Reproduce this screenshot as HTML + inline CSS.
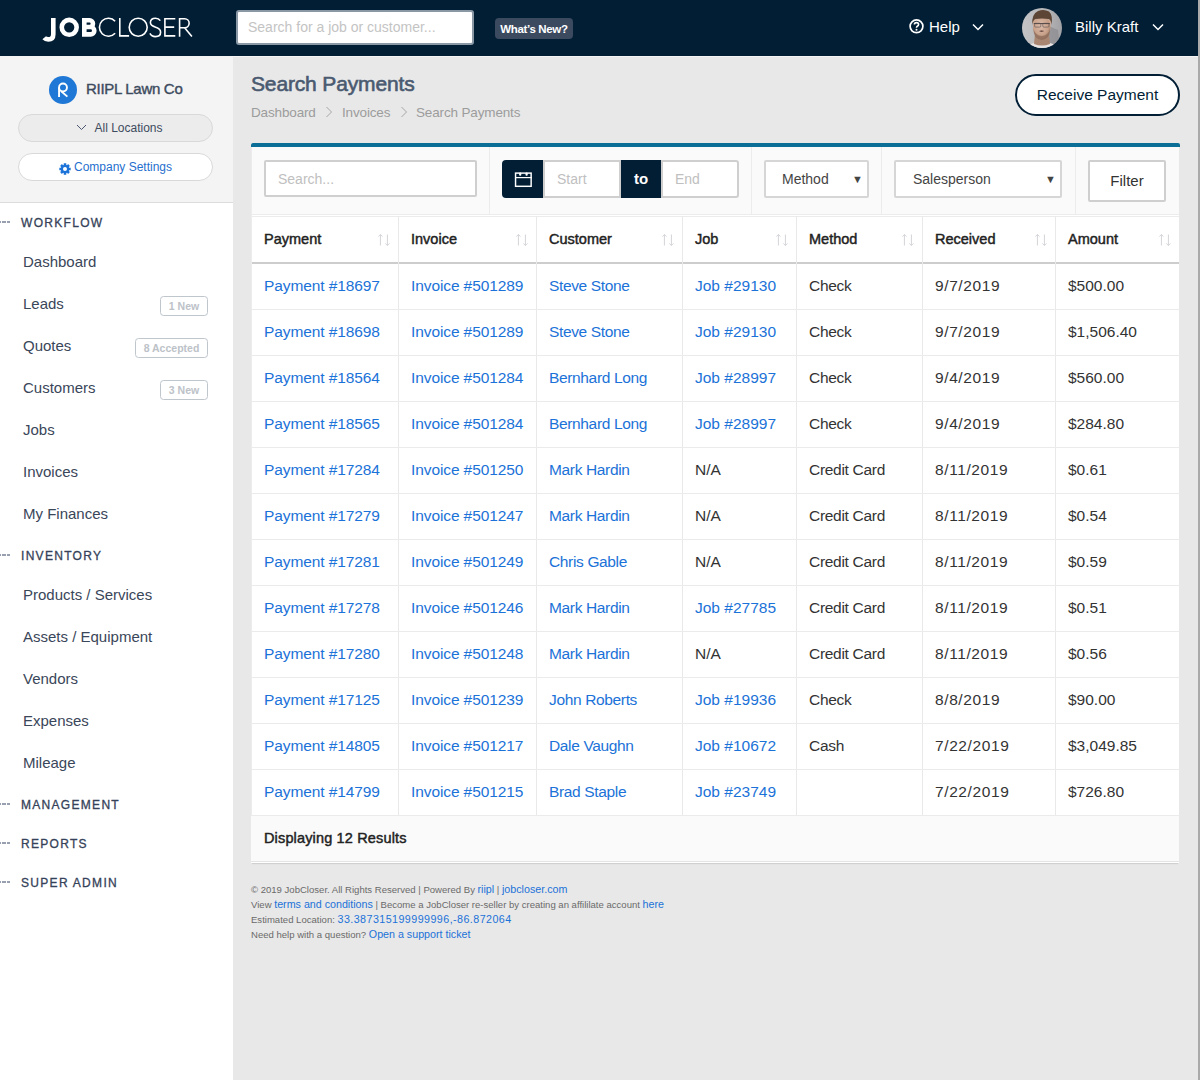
<!DOCTYPE html>
<html><head><meta charset="utf-8">
<style>
*{box-sizing:border-box;margin:0;padding:0}
html,body{width:1200px;height:1080px;overflow:hidden;background:#e8e8e8;font-family:"Liberation Sans",sans-serif}
.a{position:absolute;white-space:nowrap}
#hdr{position:absolute;left:0;top:0;width:1198px;height:56px;background:#011e35}
#rstrip{position:absolute;left:1198px;top:0;width:2px;height:1080px;background:#aaa}
#side{position:absolute;left:0;top:56px;width:233px;height:1024px;background:#fff}
#comp{position:absolute;left:0;top:0;width:233px;height:147px;background:#f4f4f4;border-bottom:1px solid #dcdcdc}
#topline{position:absolute;left:233px;top:56px;width:965px;height:1px;background:#f5f5f5}
.logo{left:43px;top:12px;font-size:26px;color:#fff;letter-spacing:0px}
.logo b{font-weight:700}
.logo span{font-weight:400}
.hsearch{left:236px;top:10px;width:238px;height:35px;background:#fff;border:2px solid #8a98a6;border-radius:3px;color:#c4c4c4;font-size:14px;padding:7px 0 0 10px}
.wn{left:495px;top:18px;width:78px;height:21px;background:#3b4a5f;border-radius:4px;color:#fff;font-size:11.5px;font-weight:700;text-align:center;line-height:22px;letter-spacing:-0.35px}
.hw{color:#fff;font-size:15px}
.nav{left:23px;font-size:15px;color:#3a4659}
.sec{left:21px;font-size:12px;font-weight:400;color:#354259;letter-spacing:1.3px;-webkit-text-stroke:0.3px #354259}
.dash{left:0;width:11px;height:2px;margin-top:-0.6px;background:linear-gradient(to right,#56627a 0 0.9px,transparent 0.9px 2.1px,#56627a 2.1px 5.9px,transparent 5.9px 7px,#56627a 7px 10.2px,transparent 10.2px);transform:scaleY(0.6)}
.badge{height:20px;border:1px solid #bfc6cc;border-radius:3.5px;color:#bcc2c8;font-size:10.5px;font-weight:700;text-align:center;line-height:18px}
.pill{left:18px;width:195px;height:28px;border:1px solid #d9d9d9;border-radius:14px;font-size:12px;text-align:center;line-height:26px}
.title{left:251px;top:72px;font-size:21px;font-weight:400;color:#4a5a70;-webkit-text-stroke:0.6px #4a5a70;letter-spacing:-0.15px}
.bc{top:105px;font-size:13.5px;color:#9c9c9c;letter-spacing:-0.15px}
.rp{left:1015px;top:74px;width:165px;height:42px;border:2px solid #011e35;border-radius:21px;background:#fff;color:#011e35;font-size:15.5px;text-align:center;line-height:37px}
#card{position:absolute;left:251px;top:143px;width:928px;height:720px;background:#fff;box-shadow:0 2px 1px -1px rgba(0,0,0,.10)}
.blue{left:251px;top:143px;width:929px;height:4px;background:#0b6e96;border-radius:2px 2px 0 0}
.fbar{left:251px;top:147px;width:928px;height:68px;background:#fafafa;border-bottom:1px solid #ececec;border-left:1px solid #efefef}
.vd{top:147px;width:1px;height:67px;background:#ececec}
.inp{height:37px;background:#fff;border:2px solid #cfcfcf;border-radius:2px;color:#c0c0c0;font-size:14px;padding:0 0 0 12px;line-height:35px}
.dk{background:#011e35;color:#fff}
.sel{height:38px;background:#fff;border:2px solid #d6d6d6;border-radius:2px;color:#444;font-size:14px;line-height:35px}
.th{position:absolute;top:216px;height:46px;padding-left:13px;line-height:46px;font-size:14.5px;font-weight:400;-webkit-text-stroke:0.45px #222;color:#222;white-space:nowrap}
.sort{position:absolute;right:8px;top:18px;width:12px;height:12px}
.td{position:absolute;height:46px;padding-left:13px;line-height:43px;font-size:15.5px;color:#333;white-space:nowrap;border-bottom:1px solid #ebebeb}
.lnk{color:#1b72d8}
.vcol{position:absolute;top:216px;width:1px;height:599px;background:#e9e9e9}
.foot{font-size:9.55px;color:#6a6a6a;left:251px}
.foot i{font-style:normal;color:#1b72d8;font-size:10.7px}
</style></head><body>
<div id="hdr"></div>
<div id="rstrip"></div>
<div id="side"><div id="comp"></div></div>
<div id="topline"></div>

<!-- header -->
<svg class="a" style="left:0;top:0" width="200" height="56" viewBox="0 0 200 56">
<g fill="none" stroke="#fff" stroke-linecap="butt">
<path d="M53.3 18 V34.2 Q53.3 39.4 48.3 39.4 Q45.5 39.4 44.2 37.8" stroke-width="4.6"/>
<circle cx="69.2" cy="27.35" r="7.45" stroke-width="4.6"/>
<path d="M84.3 18 V36.7 M84.3 20.3 H89.6 A3.35 3.35 0 0 1 89.6 27 H84.3 M84.3 27 H90.6 A3.7 3.7 0 0 1 90.6 34.4 H84.3" stroke-width="4.6"/>
<path d="M115.1 21.2 A9 9 0 1 0 115.1 33.3" stroke-width="1.6"/>
<path d="M119.8 18 V35.9 H129.1" stroke-width="1.6"/>
<circle cx="138.2" cy="27.25" r="9" stroke-width="1.6"/>
<path d="M160.3 20.6 C159.2 18.9 157.5 18.2 155.5 18.2 C152.3 18.2 150.4 20.1 150.4 22.6 C150.4 25.6 153.2 26.5 155.7 27.3 C158.6 28.2 160.6 29.6 160.6 32.2 C160.6 35 158.3 36.6 155.4 36.6 C152.9 36.6 150.9 35.4 149.9 33.4" stroke-width="1.6"/>
<path d="M175.3 18.8 H164.9 V35.9 H175.3 M164.9 27.1 H174.2" stroke-width="1.6"/>
<path d="M179.6 36.7 V18.8 H184.7 A4.45 4.45 0 0 1 184.7 27.7 H179.6 M184.6 27.7 L191.9 36.6" stroke-width="1.6"/>
</g></svg>
<div class="a hsearch">Search for a job or customer...</div>
<div class="a wn">What’s New?</div>
<svg class="a" style="left:909px;top:19px" width="16" height="16" viewBox="0 0 16 16"><circle cx="7.5" cy="7.3" r="6.4" fill="none" stroke="#fff" stroke-width="1.7"/><path d="M5.4 5.6 Q5.4 3.6 7.5 3.6 Q9.6 3.6 9.6 5.4 Q9.6 6.6 8.3 7.2 Q7.5 7.6 7.5 8.8" fill="none" stroke="#fff" stroke-width="1.6"/><circle cx="7.5" cy="10.8" r="1" fill="#fff"/></svg>
<div class="a hw" style="left:929px;top:18px">Help</div>
<svg class="a" style="left:972px;top:23px" width="12" height="8" viewBox="0 0 12 8"><path d="M1 1.5 L6 6.5 L11 1.5" fill="none" stroke="#fff" stroke-width="1.5"/></svg>
<svg class="a" style="left:1022px;top:8px" width="40" height="40" viewBox="0 0 40 40">
<defs><clipPath id="cc"><circle cx="20" cy="20" r="20"/></clipPath>
<linearGradient id="bgg" x1="0" x2="1" y1="0" y2="0"><stop offset="0" stop-color="#c4c4c6"/><stop offset="0.6" stop-color="#b6b6b8"/><stop offset="1" stop-color="#a2a2a6"/></linearGradient>
<radialGradient id="fg" cx="0.45" cy="0.4" r="0.6"><stop offset="0" stop-color="#dcbcaa"/><stop offset="0.7" stop-color="#c9a28b"/><stop offset="1" stop-color="#a4806b"/></radialGradient></defs>
<g clip-path="url(#cc)">
<rect width="40" height="40" fill="url(#bgg)"/>
<path d="M27 18 L36 22 L38 40 L26 40Z" fill="#86858a" opacity="0.6"/>
<path d="M4 40 L9 36 L15 34 L25 34 L31 36 L36 40Z" fill="#e6e3e2"/>
<path d="M13 26 L27 26 L28 36 Q20 39 12 36Z" fill="#a88672"/>
<path d="M11 12 Q20 8 29 12 L28.4 22 L11.2 22Z" fill="#cfa892"/><ellipse cx="19.8" cy="19.8" rx="8.6" ry="11.4" fill="url(#fg)"/>
<path d="M11.3 21 Q12 31.5 19.8 32 Q27.6 31.5 28.3 21 Q26 27.5 19.8 28 Q13.5 27.5 11.3 21Z" fill="#8a6a58" opacity="0.7"/>
<path d="M17 23 Q19.5 22.2 22.2 23 Q19.5 24.3 17 23Z" fill="#4a2f2c"/>
<path d="M10.2 17 Q9.5 6 16 3 Q22 0.6 27 3.5 Q31 7 29.6 17 Q29 11.5 26.5 11 Q20 9.8 13.5 11 Q11 11.8 10.2 17Z" fill="#5d4535"/>
<path d="M11.8 15.6 H27.8" stroke="#3e3838" stroke-width="0.9"/>
<rect x="12.6" y="15.3" width="6.2" height="3.8" rx="1" fill="none" stroke="#5a5050" stroke-width="0.6"/>
<rect x="20.8" y="15.3" width="6.2" height="3.8" rx="1" fill="none" stroke="#5a5050" stroke-width="0.6"/>
</g></svg>
<div class="a hw" style="left:1075px;top:18px">Billy Kraft</div>
<svg class="a" style="left:1152px;top:23px" width="12" height="8" viewBox="0 0 12 8"><path d="M1 1.5 L6 6.5 L11 1.5" fill="none" stroke="#fff" stroke-width="1.5"/></svg>

<!-- sidebar company -->
<svg class="a" style="left:49px;top:76px" width="28" height="28" viewBox="0 0 28 28"><circle cx="14" cy="14" r="14" fill="#1f78d6"/><g fill="none" stroke="#fff" stroke-width="1.9"><path d="M10.05 21 V11.5"/><circle cx="14" cy="11.5" r="3.95"/><path d="M12.2 15.3 L18.4 20.6"/></g></svg>
<div class="a" id="cname" style="left:86px;top:80px;font-size:15px;font-weight:400;color:#3d4b5e;-webkit-text-stroke:0.4px #3d4b5e;letter-spacing:-0.3px">RIIPL Lawn Co</div>
<div class="a pill" style="top:114px;background:#ececec;color:#3d4b5e">
<svg style="vertical-align:middle;margin-right:7px;margin-top:-3px;margin-left:8px" width="11" height="7" viewBox="0 0 11 7"><path d="M1 1 L5.5 5.5 L10 1" fill="none" stroke="#4b5670" stroke-width="1"/></svg>All Locations</div>
<div class="a pill" style="top:153px;background:#fff;color:#1f6fce"><svg style="vertical-align:middle;margin-right:3px;position:relative;top:1px" width="12" height="12" viewBox="0 0 12 12"><path fill="#1b72d8" fill-rule="evenodd" d="M10.11 4.73 L11.66 4.73 L11.66 7.27 L10.11 7.27 L9.80 8.01 L10.90 9.11 L9.11 10.90 L8.01 9.80 L7.27 10.11 L7.27 11.66 L4.73 11.66 L4.73 10.11 L3.99 9.80 L2.89 10.90 L1.10 9.11 L2.20 8.01 L1.89 7.27 L0.34 7.27 L0.34 4.73 L1.89 4.73 L2.20 3.99 L1.10 2.89 L2.89 1.10 L3.99 2.20 L4.73 1.89 L4.73 0.34 L7.27 0.34 L7.27 1.89 L8.01 2.20 L9.11 1.10 L10.90 2.89 L9.80 3.99Z M8 6 A2 2 0 1 0 4 6 A2 2 0 1 0 8 6Z"/></svg>Company Settings</div>

<!-- sidebar nav -->
<div class="a dash" style="top:222px"></div><div class="a sec" style="top:216px">WORKFLOW</div>
<div class="a nav" style="top:253px">Dashboard</div>
<div class="a nav" style="top:295px">Leads</div><div class="a badge" style="left:160px;top:296px;width:48px">1 New</div>
<div class="a nav" style="top:337px">Quotes</div><div class="a badge" style="left:135px;top:338px;width:73px">8 Accepted</div>
<div class="a nav" style="top:379px">Customers</div><div class="a badge" style="left:160px;top:380px;width:48px">3 New</div>
<div class="a nav" style="top:421px">Jobs</div>
<div class="a nav" style="top:463px">Invoices</div>
<div class="a nav" style="top:505px">My Finances</div>
<div class="a dash" style="top:555px"></div><div class="a sec" style="top:549px">INVENTORY</div>
<div class="a nav" style="top:586px">Products / Services</div>
<div class="a nav" style="top:628px">Assets / Equipment</div>
<div class="a nav" style="top:670px">Vendors</div>
<div class="a nav" style="top:712px">Expenses</div>
<div class="a nav" style="top:754px">Mileage</div>
<div class="a dash" style="top:804px"></div><div class="a sec" style="top:798px">MANAGEMENT</div>
<div class="a dash" style="top:843px"></div><div class="a sec" style="top:837px">REPORTS</div>
<div class="a dash" style="top:882px"></div><div class="a sec" style="top:876px">SUPER ADMIN</div>

<!-- main -->
<div class="a title">Search Payments</div>
<div class="a bc" style="left:251px">Dashboard</div>
<svg class="a" style="left:325px;top:106px" width="8" height="12" viewBox="0 0 8 12"><path d="M1.5 1 L6.5 6 L1.5 11" fill="none" stroke="#a6a6a6" stroke-width="1"/></svg>
<div class="a bc" style="left:342px">Invoices</div>
<svg class="a" style="left:400px;top:106px" width="8" height="12" viewBox="0 0 8 12"><path d="M1.5 1 L6.5 6 L1.5 11" fill="none" stroke="#a6a6a6" stroke-width="1"/></svg>
<div class="a bc" style="left:416px">Search Payments</div>
<div class="a rp">Receive Payment</div>

<div id="card"></div>
<div class="a blue"></div>
<div class="a fbar"></div>
<div class="a vd" style="left:489px"></div>
<div class="a vd" style="left:751px"></div>
<div class="a vd" style="left:881px"></div>
<div class="a vd" style="left:1075px"></div>
<div class="a inp" style="left:264px;top:160px;width:213px;padding-left:12px">Search...</div>
<div class="a dk" style="left:502px;top:160px;width:41px;height:38px;border-radius:4px 0 0 4px"></div>
<svg class="a" style="left:514px;top:171px" width="19" height="17" viewBox="0 0 19 17"><rect x="1.55" y="2.1" width="15.6" height="13.2" fill="none" stroke="#fff" stroke-width="1.45"/><line x1="1" y1="6.6" x2="17.8" y2="6.6" stroke="#fff" stroke-width="1.2"/><rect x="5.1" y="1.6" width="2.2" height="3.2" rx="1" fill="#fff"/><rect x="11.5" y="1.6" width="2.2" height="3.2" rx="1" fill="#fff"/></svg>
<div class="a inp" style="left:543px;top:160px;width:78px;height:38px;border-radius:0">Start</div>
<div class="a dk" style="left:621px;top:160px;width:40px;height:38px;font-size:15px;font-weight:700;text-align:center;line-height:37px">to</div>
<div class="a inp" style="left:661px;top:160px;width:78px;height:38px;border-radius:0 3px 3px 0">End</div>
<div class="a sel" style="left:764px;top:160px;width:105px;padding-left:16px">Method<span style="position:absolute;right:4px;top:0;font-size:11px">&#9660;</span></div>
<div class="a sel" style="left:894px;top:160px;width:168px;padding-left:17px">Salesperson<span style="position:absolute;right:4px;top:0;font-size:11px">&#9660;</span></div>
<div class="a sel" style="left:1088px;top:160px;width:78px;height:42px;border-color:#cfcfcf;color:#333;font-size:15px;text-align:center;line-height:38px">Filter</div>

<div class="a" style="left:251px;top:215px;width:928px;height:1px;background:#fff"></div>
<div class="a" style="left:251px;top:216px;width:928px;height:1px;background:#ececec"></div>
<div class="a" style="left:251px;top:262px;width:928px;height:2px;background:#cdcdcd"></div>
<div class="a" style="left:251px;top:147px;width:1px;height:715px;background:#ececec"></div>
<div class="vcol" style="left:398px"></div>
<div class="vcol" style="left:536px"></div>
<div class="vcol" style="left:682px"></div>
<div class="vcol" style="left:796px"></div>
<div class="vcol" style="left:922px"></div>
<div class="vcol" style="left:1055px"></div>
<div class="th" style="left:251px;width:147px">Payment<svg class="sort" viewBox="0 0 12 12"><path d="M2.4 0.5 V11.5 M0.3 2.6 L2.4 0.5 L4.5 2.6 M9.4 0.5 V11.5 M7.3 9.4 L9.4 11.5 L11.5 9.4" fill="none" stroke="#d4d4d8" stroke-width="1"/></svg></div>
<div class="th" style="left:398px;width:138px">Invoice<svg class="sort" viewBox="0 0 12 12"><path d="M2.4 0.5 V11.5 M0.3 2.6 L2.4 0.5 L4.5 2.6 M9.4 0.5 V11.5 M7.3 9.4 L9.4 11.5 L11.5 9.4" fill="none" stroke="#d4d4d8" stroke-width="1"/></svg></div>
<div class="th" style="left:536px;width:146px">Customer<svg class="sort" viewBox="0 0 12 12"><path d="M2.4 0.5 V11.5 M0.3 2.6 L2.4 0.5 L4.5 2.6 M9.4 0.5 V11.5 M7.3 9.4 L9.4 11.5 L11.5 9.4" fill="none" stroke="#d4d4d8" stroke-width="1"/></svg></div>
<div class="th" style="left:682px;width:114px">Job<svg class="sort" viewBox="0 0 12 12"><path d="M2.4 0.5 V11.5 M0.3 2.6 L2.4 0.5 L4.5 2.6 M9.4 0.5 V11.5 M7.3 9.4 L9.4 11.5 L11.5 9.4" fill="none" stroke="#d4d4d8" stroke-width="1"/></svg></div>
<div class="th" style="left:796px;width:126px">Method<svg class="sort" viewBox="0 0 12 12"><path d="M2.4 0.5 V11.5 M0.3 2.6 L2.4 0.5 L4.5 2.6 M9.4 0.5 V11.5 M7.3 9.4 L9.4 11.5 L11.5 9.4" fill="none" stroke="#d4d4d8" stroke-width="1"/></svg></div>
<div class="th" style="left:922px;width:133px">Received<svg class="sort" viewBox="0 0 12 12"><path d="M2.4 0.5 V11.5 M0.3 2.6 L2.4 0.5 L4.5 2.6 M9.4 0.5 V11.5 M7.3 9.4 L9.4 11.5 L11.5 9.4" fill="none" stroke="#d4d4d8" stroke-width="1"/></svg></div>
<div class="th" style="left:1055px;width:124px">Amount<svg class="sort" viewBox="0 0 12 12"><path d="M2.4 0.5 V11.5 M0.3 2.6 L2.4 0.5 L4.5 2.6 M9.4 0.5 V11.5 M7.3 9.4 L9.4 11.5 L11.5 9.4" fill="none" stroke="#d4d4d8" stroke-width="1"/></svg></div>
<div class="td lnk" style="letter-spacing:-0.1px;left:251px;top:264px;width:147px">Payment #18697</div>
<div class="td lnk" style="letter-spacing:-0.1px;left:398px;top:264px;width:138px">Invoice #501289</div>
<div class="td lnk" style="letter-spacing:-0.35px;left:536px;top:264px;width:146px">Steve Stone</div>
<div class="td lnk" style="left:682px;top:264px;width:114px">Job #29130</div>
<div class="td" style="letter-spacing:-0.3px;left:796px;top:264px;width:126px">Check</div>
<div class="td" style="letter-spacing:0.6px;left:922px;top:264px;width:133px">9/7/2019</div>
<div class="td" style="left:1055px;top:264px;width:125px">$500.00</div>
<div class="td lnk" style="letter-spacing:-0.1px;left:251px;top:310px;width:147px">Payment #18698</div>
<div class="td lnk" style="letter-spacing:-0.1px;left:398px;top:310px;width:138px">Invoice #501289</div>
<div class="td lnk" style="letter-spacing:-0.35px;left:536px;top:310px;width:146px">Steve Stone</div>
<div class="td lnk" style="left:682px;top:310px;width:114px">Job #29130</div>
<div class="td" style="letter-spacing:-0.3px;left:796px;top:310px;width:126px">Check</div>
<div class="td" style="letter-spacing:0.6px;left:922px;top:310px;width:133px">9/7/2019</div>
<div class="td" style="left:1055px;top:310px;width:125px">$1,506.40</div>
<div class="td lnk" style="letter-spacing:-0.1px;left:251px;top:356px;width:147px">Payment #18564</div>
<div class="td lnk" style="letter-spacing:-0.1px;left:398px;top:356px;width:138px">Invoice #501284</div>
<div class="td lnk" style="letter-spacing:-0.35px;left:536px;top:356px;width:146px">Bernhard Long</div>
<div class="td lnk" style="left:682px;top:356px;width:114px">Job #28997</div>
<div class="td" style="letter-spacing:-0.3px;left:796px;top:356px;width:126px">Check</div>
<div class="td" style="letter-spacing:0.6px;left:922px;top:356px;width:133px">9/4/2019</div>
<div class="td" style="left:1055px;top:356px;width:125px">$560.00</div>
<div class="td lnk" style="letter-spacing:-0.1px;left:251px;top:402px;width:147px">Payment #18565</div>
<div class="td lnk" style="letter-spacing:-0.1px;left:398px;top:402px;width:138px">Invoice #501284</div>
<div class="td lnk" style="letter-spacing:-0.35px;left:536px;top:402px;width:146px">Bernhard Long</div>
<div class="td lnk" style="left:682px;top:402px;width:114px">Job #28997</div>
<div class="td" style="letter-spacing:-0.3px;left:796px;top:402px;width:126px">Check</div>
<div class="td" style="letter-spacing:0.6px;left:922px;top:402px;width:133px">9/4/2019</div>
<div class="td" style="left:1055px;top:402px;width:125px">$284.80</div>
<div class="td lnk" style="letter-spacing:-0.1px;left:251px;top:448px;width:147px">Payment #17284</div>
<div class="td lnk" style="letter-spacing:-0.1px;left:398px;top:448px;width:138px">Invoice #501250</div>
<div class="td lnk" style="letter-spacing:-0.35px;left:536px;top:448px;width:146px">Mark Hardin</div>
<div class="td" style="left:682px;top:448px;width:114px">N/A</div>
<div class="td" style="letter-spacing:-0.3px;left:796px;top:448px;width:126px">Credit Card</div>
<div class="td" style="letter-spacing:0.6px;left:922px;top:448px;width:133px">8/11/2019</div>
<div class="td" style="left:1055px;top:448px;width:125px">$0.61</div>
<div class="td lnk" style="letter-spacing:-0.1px;left:251px;top:494px;width:147px">Payment #17279</div>
<div class="td lnk" style="letter-spacing:-0.1px;left:398px;top:494px;width:138px">Invoice #501247</div>
<div class="td lnk" style="letter-spacing:-0.35px;left:536px;top:494px;width:146px">Mark Hardin</div>
<div class="td" style="left:682px;top:494px;width:114px">N/A</div>
<div class="td" style="letter-spacing:-0.3px;left:796px;top:494px;width:126px">Credit Card</div>
<div class="td" style="letter-spacing:0.6px;left:922px;top:494px;width:133px">8/11/2019</div>
<div class="td" style="left:1055px;top:494px;width:125px">$0.54</div>
<div class="td lnk" style="letter-spacing:-0.1px;left:251px;top:540px;width:147px">Payment #17281</div>
<div class="td lnk" style="letter-spacing:-0.1px;left:398px;top:540px;width:138px">Invoice #501249</div>
<div class="td lnk" style="letter-spacing:-0.35px;left:536px;top:540px;width:146px">Chris Gable</div>
<div class="td" style="left:682px;top:540px;width:114px">N/A</div>
<div class="td" style="letter-spacing:-0.3px;left:796px;top:540px;width:126px">Credit Card</div>
<div class="td" style="letter-spacing:0.6px;left:922px;top:540px;width:133px">8/11/2019</div>
<div class="td" style="left:1055px;top:540px;width:125px">$0.59</div>
<div class="td lnk" style="letter-spacing:-0.1px;left:251px;top:586px;width:147px">Payment #17278</div>
<div class="td lnk" style="letter-spacing:-0.1px;left:398px;top:586px;width:138px">Invoice #501246</div>
<div class="td lnk" style="letter-spacing:-0.35px;left:536px;top:586px;width:146px">Mark Hardin</div>
<div class="td lnk" style="left:682px;top:586px;width:114px">Job #27785</div>
<div class="td" style="letter-spacing:-0.3px;left:796px;top:586px;width:126px">Credit Card</div>
<div class="td" style="letter-spacing:0.6px;left:922px;top:586px;width:133px">8/11/2019</div>
<div class="td" style="left:1055px;top:586px;width:125px">$0.51</div>
<div class="td lnk" style="letter-spacing:-0.1px;left:251px;top:632px;width:147px">Payment #17280</div>
<div class="td lnk" style="letter-spacing:-0.1px;left:398px;top:632px;width:138px">Invoice #501248</div>
<div class="td lnk" style="letter-spacing:-0.35px;left:536px;top:632px;width:146px">Mark Hardin</div>
<div class="td" style="left:682px;top:632px;width:114px">N/A</div>
<div class="td" style="letter-spacing:-0.3px;left:796px;top:632px;width:126px">Credit Card</div>
<div class="td" style="letter-spacing:0.6px;left:922px;top:632px;width:133px">8/11/2019</div>
<div class="td" style="left:1055px;top:632px;width:125px">$0.56</div>
<div class="td lnk" style="letter-spacing:-0.1px;left:251px;top:678px;width:147px">Payment #17125</div>
<div class="td lnk" style="letter-spacing:-0.1px;left:398px;top:678px;width:138px">Invoice #501239</div>
<div class="td lnk" style="letter-spacing:-0.35px;left:536px;top:678px;width:146px">John Roberts</div>
<div class="td lnk" style="left:682px;top:678px;width:114px">Job #19936</div>
<div class="td" style="letter-spacing:-0.3px;left:796px;top:678px;width:126px">Check</div>
<div class="td" style="letter-spacing:0.6px;left:922px;top:678px;width:133px">8/8/2019</div>
<div class="td" style="left:1055px;top:678px;width:125px">$90.00</div>
<div class="td lnk" style="letter-spacing:-0.1px;left:251px;top:724px;width:147px">Payment #14805</div>
<div class="td lnk" style="letter-spacing:-0.1px;left:398px;top:724px;width:138px">Invoice #501217</div>
<div class="td lnk" style="letter-spacing:-0.35px;left:536px;top:724px;width:146px">Dale Vaughn</div>
<div class="td lnk" style="left:682px;top:724px;width:114px">Job #10672</div>
<div class="td" style="letter-spacing:-0.3px;left:796px;top:724px;width:126px">Cash</div>
<div class="td" style="letter-spacing:0.6px;left:922px;top:724px;width:133px">7/22/2019</div>
<div class="td" style="left:1055px;top:724px;width:125px">$3,049.85</div>
<div class="td lnk" style="letter-spacing:-0.1px;left:251px;top:770px;width:147px">Payment #14799</div>
<div class="td lnk" style="letter-spacing:-0.1px;left:398px;top:770px;width:138px">Invoice #501215</div>
<div class="td lnk" style="letter-spacing:-0.35px;left:536px;top:770px;width:146px">Brad Staple</div>
<div class="td lnk" style="left:682px;top:770px;width:114px">Job #23749</div>
<div class="td" style="letter-spacing:-0.3px;left:796px;top:770px;width:126px"></div>
<div class="td" style="letter-spacing:0.6px;left:922px;top:770px;width:133px">7/22/2019</div>
<div class="td" style="left:1055px;top:770px;width:125px">$726.80</div><div class="a" style="left:251px;top:816px;width:928px;height:46px;background:#fafafa;border-bottom:1px solid #e4e4e4"></div>
<div class="a" style="left:264px;top:830px;font-size:14.5px;font-weight:400;-webkit-text-stroke:0.45px #222;color:#222;letter-spacing:0.15px">Displaying 12 Results</div>

<div class="a foot" style="top:883px">© 2019 JobCloser. All Rights Reserved | Powered By <i>riipl</i> | <i>jobcloser.com</i></div>
<div class="a foot" style="top:898px">View <i>terms and conditions</i> | Become a JobCloser re-seller by creating an affililate account <i>here</i></div>
<div class="a foot" style="top:913px">Estimated Location: <i style="letter-spacing:0.45px">33.387315199999996,-86.872064</i></div>
<div class="a foot" style="top:928px">Need help with a question? <i>Open a support ticket</i></div>
</body></html>
